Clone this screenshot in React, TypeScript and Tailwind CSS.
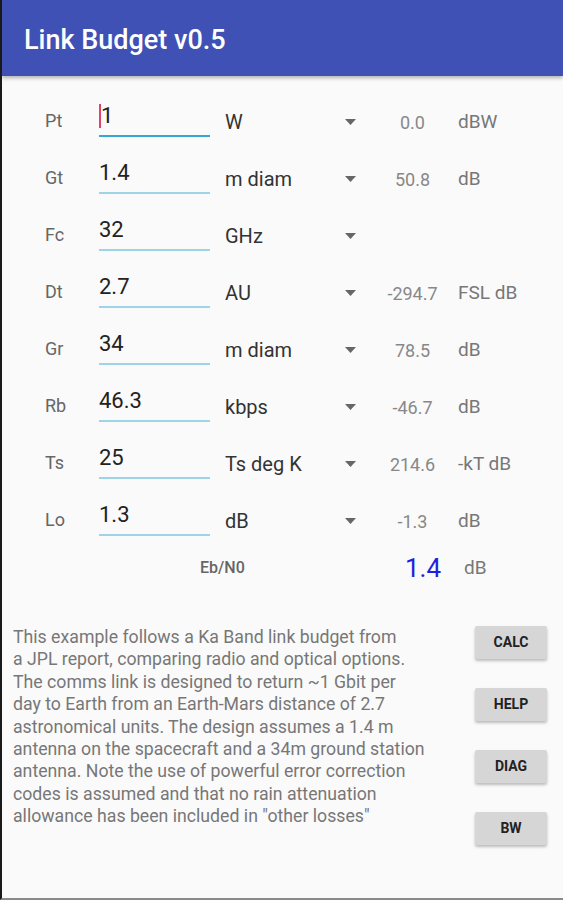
import React from "react";

type Row = {
  label: string;
  value: string;
  unit: string;
  result?: string;
  dim?: string;
  focused?: boolean;
};

const rows: Row[] = [
  { label: "Pt", value: "1", unit: "W", result: "0.0", dim: "dBW", focused: true },
  { label: "Gt", value: "1.4", unit: "m diam", result: "50.8", dim: "dB" },
  { label: "Fc", value: "32", unit: "GHz" },
  { label: "Dt", value: "2.7", unit: "AU", result: "-294.7", dim: "FSL dB" },
  { label: "Gr", value: "34", unit: "m diam", result: "78.5", dim: "dB" },
  { label: "Rb", value: "46.3", unit: "kbps", result: "-46.7", dim: "dB" },
  { label: "Ts", value: "25", unit: "Ts deg K", result: "214.6", dim: "-kT dB" },
  { label: "Lo", value: "1.3", unit: "dB", result: "-1.3", dim: "dB" },
];

const about = [
  "This example follows a Ka Band link budget from",
  "a JPL report, comparing radio and optical options.",
  "The comms link is designed to return ~1 Gbit per",
  "day to Earth from an Earth-Mars distance of 2.7",
  "astronomical units. The design assumes a 1.4 m",
  "antenna on the spacecraft and a 34m ground station",
  "antenna. Note the use of powerful error correction",
  "codes is assumed and that no rain attenuation",
  'allowance has been included in "other losses"',
];

const Caret = () => (
  <svg width="11" height="6" viewBox="0 0 11 6" className="fill-[#666]">
    <path d="M0 0h11L5.5 6z" />
  </svg>
);

const BudgetRow = ({ row }: { row: Row }) => (
  <div className="flex items-center h-[57px]">
    <div className="w-[97px] pl-[43px] text-[18px] text-[#666]">{row.label}</div>
    <div
      className={
        "w-[111px] h-[35px] flex items-start -mt-[3px] text-[22px] leading-[28px] text-[#222] border-b-2 " +
        (row.focused ? "border-[#35a9d6]" : "border-[#9fd3e6]")
      }
    >
      {row.focused && <span className="w-[2px] h-[24px] mt-[2px] bg-[#e0436a]" />}
      <span>{row.value}</span>
    </div>
    <div className="w-[135px] pl-[15px] text-[20px] text-[#333] mt-[3px]">{row.unit}</div>
    <div className="w-[22px] flex justify-start mt-[2px]">
      <Caret />
    </div>
    <div className="w-[91px] text-center text-[18px] text-[#888] mt-[3px]">{row.result}</div>
    <div className="text-[19px] text-[#777] mt-[3px]">{row.dim}</div>
  </div>
);

const Btn = ({ label }: { label: string }) => (
  <button className="w-[72px] h-[33px] bg-[#d6d6d6] rounded-[2px] text-[14px] font-bold text-[#222] shadow-[0_2px_3px_rgba(0,0,0,0.25)]">
    {label}
  </button>
);

export default function App() {
  return (
    <div
      className="w-[563px] h-[900px] bg-[#fafafa] border-l-2 border-[#1a1a1a] border-b-2 border-b-[#8a8a8a] flex flex-col overflow-hidden"
      style={{ fontFamily: "Roboto, 'Liberation Sans', sans-serif" }}
    >
      <div className="h-[76px] bg-[#3f51b5] flex items-center pl-[22px] shadow-[0_2px_4px_rgba(0,0,0,0.3)] z-10">
        <h1 className="text-white text-[27px] font-medium mt-[4px]">Link Budget v0.5</h1>
      </div>
      <div className="pt-[16px]">
        {rows.map((r) => (
          <BudgetRow key={r.label} row={r} />
        ))}
        <div className="flex items-center h-[40px]">
          <div className="w-[198px]" />
          <div className="w-[184px] text-[16px] font-medium text-[#666]">Eb/N0</div>
          <div className="w-[80px] text-[26px] text-[#1f1fe0] pl-[21px]">1.4</div>
          <div className="text-[19px] text-[#777]">dB</div>
        </div>
      </div>
      <div className="flex mt-[38px] pl-[11px]">
        <p className="w-[460px] text-[17.7px] leading-[22.4px] text-[#777]">
          {about.map((line) => (
            <span key={line} className="block whitespace-nowrap">
              {line}
            </span>
          ))}
        </p>
        <div className="flex flex-col gap-[29px] ml-[2px]">
          <Btn label="CALC" />
          <Btn label="HELP" />
          <Btn label="DIAG" />
          <Btn label="BW" />
        </div>
      </div>
    </div>
  );
}
